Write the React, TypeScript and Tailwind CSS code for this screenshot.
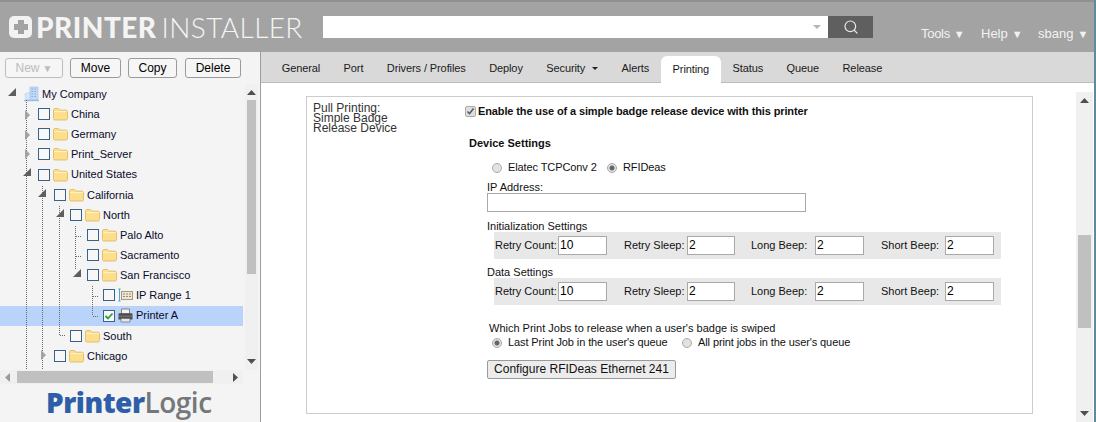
import { Search } from 'lucide-react';

const FONT = "font-['Liberation_Sans',Arial,sans-serif]";

const TABS = ['General', 'Port', 'Drivers / Profiles', 'Deploy', 'Security', 'Alerts', 'Printing', 'Status', 'Queue', 'Release'];

const INDENT = ['pl-[42px]', 'pl-[38px]', 'pl-[54px]', 'pl-[70px]', 'pl-[87px]', 'pl-[103px]'];

type Node = { label: string; level: number; kind?: 'folder' | 'range' | 'printer' | 'root'; checked?: boolean; selected?: boolean };

const TREE: Node[] = [
  { label: 'My Company', level: 0, kind: 'root' },
  { label: 'China', level: 1 },
  { label: 'Germany', level: 1 },
  { label: 'Print_Server', level: 1 },
  { label: 'United States', level: 1 },
  { label: 'California', level: 2 },
  { label: 'North', level: 3 },
  { label: 'Palo Alto', level: 4 },
  { label: 'Sacramento', level: 4 },
  { label: 'San Francisco', level: 4 },
  { label: 'IP Range 1', level: 5, kind: 'range' },
  { label: 'Printer A', level: 5, kind: 'printer', checked: true, selected: true },
  { label: 'South', level: 3 },
  { label: 'Chicago', level: 2 },
];

const FIELDS = [
  { label: 'Retry Count:', value: '10', cell: 'w-[129px]', labelW: 'w-[63px]', inputW: 'w-[49px]' },
  { label: 'Retry Sleep:', value: '2', cell: 'w-[127px]', labelW: 'w-[63px]', inputW: 'w-[48px]' },
  { label: 'Long Beep:', value: '2', cell: 'w-[130px]', labelW: 'w-[64px]', inputW: 'w-[49px]' },
  { label: 'Short Beep:', value: '2', cell: 'w-[113px]', labelW: 'w-[64px]', inputW: 'w-[49px]' },
];

function Folder() {
  return (
    <svg aria-hidden="true" className="h-[14px] w-[15px] shrink-0" viewBox="0 0 15 14">
      <path d="M.5 3C.5 2 1.100 1.500 2 1.500h3.400L7 3.200h6c.8 0 1.500.6 1.500 1.400v7c0 .8-.7 1.400-1.500 1.400H2c-.9 0-1.500-.6-1.500-1.400z" fill="#fdde8c" stroke="#dcb65e" strokeWidth=".8" />
      <path d="M1.200 4.600h12.600" stroke="#fff3c8" strokeWidth="1" />
    </svg>
  );
}

function RootIcon() {
  return (
    <svg aria-hidden="true" className="h-[16px] w-[16px] shrink-0" viewBox="0 0 16 16">
      <path d="M6 1h8v13H6z" fill="#c3d9f5" stroke="#a3c2ea" strokeWidth=".6" />
      <path d="M1 8l5-2v8H2z" fill="#d8e6f9" stroke="#b0cbee" strokeWidth=".6" />
      <path d="M7.500 3h1.500M10.500 3H12M7.500 5.500h1.500M10.500 5.500H12M7.500 8h1.500M10.500 8H12M7.500 10.500h1.500M10.500 10.500H12" stroke="#7fa9e2" strokeWidth="1.200" />
      <path d="M0 14.500h15" stroke="#8fbdf0" strokeWidth="1.400" />
    </svg>
  );
}

function RangeIcon() {
  return (
    <svg aria-hidden="true" className="h-[14px] w-[15px] shrink-0" viewBox="0 0 15 14">
      <path d="M1.500 1v12M.3 1h2.400M.3 13h2.400" stroke="#4aa8e0" strokeWidth="1" fill="none" />
      <rect x="3.500" y="3.500" width="11" height="8" fill="#efe6cf" stroke="#a89a78" />
      <path d="M5 5.500h2v1H5zM8 5.500h2v1H8zM11 5.500h2v1h-2zM5 8h2v1H5zM8 8h2v1H8zM11 8h2v1h-2z" fill="#8d8d8d" />
    </svg>
  );
}

function PrinterIcon() {
  return (
    <svg aria-hidden="true" className="h-[15px] w-[15px] shrink-0" viewBox="0 0 15 15">
      <path d="M3.500 1h8v5h-8z" fill="#f3f3f3" stroke="#6b6b6b" strokeWidth=".8" />
      <path d="M.5 6.500c0-.8.5-1.200 1.200-1.200h11.600c.7 0 1.200.4 1.200 1.200v5H.5z" fill="#4c4c4c" />
      <path d="M3 10.500h9v3.500H3z" fill="#e6e6e6" stroke="#6b6b6b" strokeWidth=".7" />
      <path d="M1 8.200h13" stroke="#8a8a8a" strokeWidth=".8" />
    </svg>
  );
}

function TreeBox({ checked }: { checked?: boolean }) {
  return (
    <span className="flex h-[12px] w-[12px] shrink-0 items-center justify-center border border-[#3b6286] bg-[#f7f7f7]">
      {checked && (
        <svg aria-hidden="true" className="h-[10px] w-[10px]" viewBox="0 0 10 10">
          <path d="M1.500 5l2.500 2.500L8.500 2.500" fill="none" stroke="#2f9e3c" strokeWidth="1.800" />
        </svg>
      )}
    </span>
  );
}

// connector lines and expand arrows of the tree, coordinates relative to the tree box
function TreeLines() {
  const dots = '#6a6a6a';
  const y = (n: number) => n - 84;
  const V = (x: number, a: number, b: number) => <path key={`${x}-${a}`} d={`M${x} ${y(a)}V${y(b)}`} stroke={dots} strokeDasharray="1 1" />;
  const H = (a: number, b: number, at: number) => <path key={`h${a}-${at}`} d={`M${a} ${y(at)}H${b}`} stroke={dots} strokeDasharray="1 1" />;
  const Right = (x: number, at: number) => <path key={`r${at}-${x}`} d={`M${x} ${y(at) - 5}l5 5l-5 5z`} fill="#a2a2a2" />;
  const Down = (x: number, at: number) => <path key={`d${at}-${x}`} d={`M${x} ${y(at) + 4}h8v-8z`} fill="#5e5e5e" />;
  return (
    <svg aria-hidden="true" className="pointer-events-none absolute left-0 top-0 h-[286px] w-[243px]" viewBox="0 0 243 286">
      {V(26.500, 100, 370)}
      {V(42.500, 186, 370)}
      {V(59.500, 206, 335)}
      {V(75.500, 226, 270)}
      {V(92.500, 286, 316)}
      {H(60, 65, 335.500)}
      {H(76, 81, 236.500)}
      {H(76, 81, 256.500)}
      {H(93, 98, 296.500)}
      {H(93, 98, 316.500)}
      {Down(8, 92)}
      {Right(25, 115)}
      {Right(25, 135)}
      {Right(25, 154)}
      {Down(23, 172)}
      {Down(38, 193)}
      {Down(56, 213)}
      {Down(73, 273)}
      {Right(41, 355)}
    </svg>
  );
}

function TreeRow({ node }: { node: Node }) {
  const kind = node.kind ?? 'folder';
  return (
    <div className={`flex h-[20.15px] items-center ${INDENT[node.level]} ${node.selected ? 'bg-[#b9d3fb]' : ''}`}>
      {kind === 'root' ? (
        <span className="-ml-[18px] mr-[2px] flex">
          <RootIcon />
        </span>
      ) : (
        <>
          <TreeBox checked={node.checked} />
          <span className="mx-[3px] flex">
            {kind === 'folder' && <Folder />}
            {kind === 'range' && <RangeIcon />}
            {kind === 'printer' && <PrinterIcon />}
          </span>
        </>
      )}
      <span className="whitespace-nowrap text-[11px] text-[#0a0a2a]">{node.label}</span>
    </div>
  );
}

function ToolbarButton({ label, disabled, w, caret }: { label: string; disabled?: boolean; w: string; caret?: boolean }) {
  return (
    <button className={`h-[20px] ${w} shrink-0 rounded-[3px] border bg-[#f6f6f6] text-[12px] leading-[16px] ${disabled ? 'border-[#bdbdbd] text-[#bcbcbc]' : 'border-[#9a9a9a] text-black'}`}>
      {label}
      {caret && <span className="ml-[3px] text-[10px]">▼</span>}
    </button>
  );
}

function BeepRow() {
  return (
    <div className="ml-[29px] flex h-[27px] w-[507px] items-center bg-[#e8e8e8] pl-[1px]">
      {FIELDS.map((f) => (
        <div key={f.label} className={`flex items-center ${f.cell}`}>
          <span className={`${f.labelW} shrink-0 whitespace-nowrap text-[11px]`}>{f.label}</span>
          <input readOnly value={f.value} className={`h-[19px] ${f.inputW} border border-[#a9a9a9] bg-white pl-[1px] text-[12px] text-black`} />
        </div>
      ))}
    </div>
  );
}

function Radio({ checked, label, className }: { checked?: boolean; label: string; className: string }) {
  return (
    <label className={`flex items-center whitespace-nowrap text-[11px] tracking-[-.1px] ${className}`}>
      <input
        type="radio"
        disabled
        defaultChecked={checked}
        className="m-0 mr-[6px] h-[10px] w-[10px] appearance-none rounded-full border border-[#a9a9a9] bg-[#e2e2e2] checked:bg-[radial-gradient(circle,#666_0,#666_2px,#e2e2e2_3px)]"
      />
      {label}
    </label>
  );
}

function Scrollbar({ thumb }: { thumb: string }) {
  return (
    <div className="flex h-full w-full flex-col items-center bg-[#f0f0f0]">
      <svg aria-hidden="true" className="mt-[6px] h-[5px] w-[9px] shrink-0" viewBox="0 0 9 5"><path d="M0 5L4.500 0 9 5z" fill="#505050" /></svg>
      <div className="flex-1 self-stretch px-[2px]">
        <div className={`w-full bg-[#c0c0c0] ${thumb}`} />
      </div>
      <svg aria-hidden="true" className="mb-[6px] h-[5px] w-[9px] shrink-0" viewBox="0 0 9 5"><path d="M0 0L4.500 5 9 0z" fill="#505050" /></svg>
    </div>
  );
}

function MenuItem({ label, className }: { label: string; className: string }) {
  return (
    <span className={`flex items-center whitespace-nowrap ${className}`}>
      {label}
      <span className="ml-[4px] text-[11px]">▼</span>
    </span>
  );
}

export default function App() {
  return (
    <div className={`flex h-[422px] w-[1096px] flex-col overflow-hidden border-r-[2px] border-[#5b8c98] bg-white ${FONT}`}>
      <header className="flex h-[52px] shrink-0 items-start border-t-[2px] border-[#909090] bg-[#a3a3a3]">
        <div className="ml-[9px] mt-[14px] flex h-[22px] w-[23px] shrink-0 items-center justify-center rounded-[5px] bg-[#f2f2f2]">
          <div className="relative h-[14px] w-[14px]">
            <span className="absolute left-[4px] top-0 h-[14px] w-[6px] bg-[#a3a3a3]" />
            <span className="absolute left-0 top-[4px] h-[6px] w-[14px] bg-[#a3a3a3]" />
          </div>
        </div>
        <div className="ml-[4px] mt-[8px] flex w-[270px] shrink-0 items-baseline text-[28px] leading-[34px] text-[#f4f4f4]">
          <span className="font-['Lato',sans-serif] font-black tracking-[.5px]">PRINTER</span>
          <span className="ml-[5px] font-['Lato',sans-serif] font-light tracking-[.4px]">INSTALLER</span>
        </div>
        <div className="ml-[17px] mt-[14px] flex h-[22px] w-[550px] shrink-0">
          <div className="flex w-[505px] items-center justify-end bg-white pr-[7px]">
            <span className="h-0 w-0 border-x-[4px] border-t-[4px] border-x-transparent border-t-[#b5b5b5]" />
          </div>
          <div className="flex w-[45px] items-center justify-center bg-[#5f5f5f]">
            <Search className="h-[16px] w-[16px] text-[#e8e8e8]" strokeWidth={1.800} />
          </div>
        </div>
        <nav className="ml-[48px] mt-[23px] flex text-[13px] leading-[18px] text-[#f2f2f2]">
          <MenuItem label="Tools" className="w-[60px] tracking-[-.3px]" />
          <MenuItem label="Help" className="w-[57px]" />
          <MenuItem label="sbang" className="" />
        </nav>
      </header>

      <div className="flex min-h-0 flex-1">
        <aside className="flex w-[261px] shrink-0 flex-col border-r border-[#9d9d9d] bg-[#f4f4f4]">
          <div className="flex h-[32px] shrink-0 items-start pl-[5px] pt-[6px]">
            <ToolbarButton label="New" caret disabled w="w-[58px]" />
            <span className="ml-[7px] flex"><ToolbarButton label="Move" w="w-[51px]" /></span>
            <span className="ml-[7px] flex"><ToolbarButton label="Copy" w="w-[49px]" /></span>
            <span className="ml-[8px] flex"><ToolbarButton label="Delete" w="w-[56px]" /></span>
          </div>
          <div className="flex h-[286px] shrink-0">
            <div className="relative w-[243px] overflow-hidden">
              {TREE.map((node) => <TreeRow key={node.label} node={node} />)}
              <TreeLines />
            </div>
            <div className="ml-[2px] h-full w-[13px]">
              <Scrollbar thumb="mt-[5px] h-[174px]" />
            </div>
          </div>
          <div className="flex h-[14px] w-[243px] shrink-0 items-center bg-[#f0f0f0]">
            <svg aria-hidden="true" className="ml-[5px] h-[9px] w-[5px] shrink-0" viewBox="0 0 5 9"><path d="M5 0L0 4.500 5 9z" fill="#9a9a9a" /></svg>
            <div className="ml-[7px] h-[12px] w-[196px] bg-[#c0c0c0]" />
            <svg aria-hidden="true" className="ml-[20px] h-[9px] w-[5px] shrink-0" viewBox="0 0 5 9"><path d="M0 0L5 4.500 0 9z" fill="#505050" /></svg>
          </div>
          <div className="mt-px pl-[46px] text-[28px] leading-[34px] tracking-[-.5px]">
            <span className="font-['Open_Sans',sans-serif] font-extrabold text-[#2f5ea8]">Printer</span>
            <span className="font-['Open_Sans',sans-serif] font-semibold text-[#75787b]">Logic</span>
          </div>
        </aside>

        <main className="flex min-w-0 flex-1 flex-col">
          <div className="flex h-[31px] shrink-0 items-end border-b border-[#bcbcbc] bg-[#d9d9d9] pl-[9px]">
            {TABS.map((tab) => (
              <div
                key={tab}
                className={`flex items-center whitespace-nowrap px-[11.720px] pb-px text-[11px] tracking-[-.1px] text-[#1a1a1a] ${tab === 'Printing' ? '-mb-px h-[27px] rounded-t-[6px] bg-white' : 'h-[26px]'}`}
              >
                {tab}
                {tab === 'Security' && <span className="ml-[7px] h-0 w-0 border-x-[3.500px] border-t-[3.500px] border-x-transparent border-t-[#222]" />}
              </div>
            ))}
          </div>
          <div className="flex min-h-0 flex-1 items-start">
            <div className="flex-1 pl-[45px] pt-[13px]">
              <section className="flex h-[318px] w-[727px] border border-[#cccccc] text-[#111]">
                <div className="w-[158px] shrink-0 pl-[6px] pt-[6px] text-[12px] leading-[10px] text-[#333]">
                  Pull Printing:<br />Simple Badge<br />Release Device
                </div>
                <div className="flex-1">
                  <label className="mt-[6px] flex items-center text-[11px] font-bold tracking-[-.12px]">
                    <span className="mr-[2px] flex h-[11px] w-[11px] items-center justify-center rounded-[2px] border border-[#ababab] bg-[#dedede]">
                      <svg aria-hidden="true" className="h-[9px] w-[9px]" viewBox="0 0 9 9"><path d="M1.500 4.500l2 2.200L7.500 1.500" fill="none" stroke="#555" strokeWidth="1.500" /></svg>
                    </span>
                    Enable the use of a simple badge release device with this printer
                  </label>
                  <div className="ml-[4px] mt-[16px] text-[11px] font-bold leading-[14px]">Device Settings</div>
                  <div className="ml-[27px] mt-[11px] flex h-[14px]">
                    <Radio label="Elatec TCPConv 2" className="w-[115px]" />
                    <Radio checked label="RFIDeas" className="" />
                  </div>
                  <div className="ml-[22px] mt-[7px] text-[11px] leading-[11px]">IP Address:</div>
                  <input readOnly className="ml-[22px] block h-[19px] w-[319px] border border-[#a9a9a9] bg-white" />
                  <div className="ml-[22px] mt-[9px] text-[11px] leading-[11px]">Initialization Settings</div>
                  <BeepRow />
                  <div className="ml-[22px] mt-[7px] text-[11px] leading-[12px]">Data Settings</div>
                  <BeepRow />
                  <div className="ml-[24px] mt-[16px] text-[11px] leading-[14px]">Which Print Jobs to release when a user's badge is swiped</div>
                  <div className="ml-[27px] mt-px flex h-[14px]">
                    <Radio checked label="Last Print Job in the user's queue" className="w-[190px]" />
                    <Radio label="All print jobs in the user's queue" className="" />
                  </div>
                  <button className="ml-[22px] mt-[10px] block h-[19px] w-[189px] rounded-[2px] border border-[#9a9a9a] bg-[#ececec] text-[12px] leading-[15px] text-[#111]">
                    Configure RFIDeas Ethernet 241
                  </button>
                </div>
              </section>
            </div>
            <div className="mt-[9px] h-[330px] w-[17px] shrink-0">
              <Scrollbar thumb="mt-[132px] h-[93px]" />
            </div>
            <div className="w-px shrink-0" />
          </div>
        </main>
      </div>
    </div>
  );
}
